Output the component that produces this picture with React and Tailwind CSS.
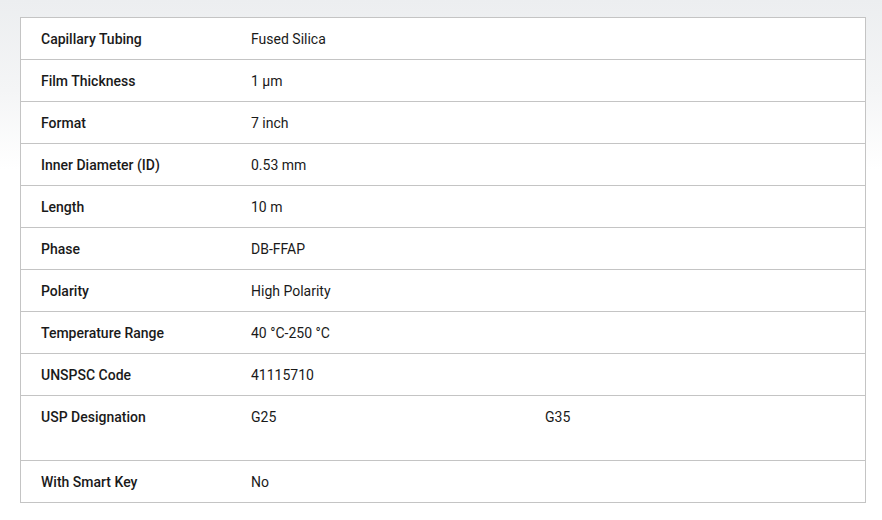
const specs = [
  ["Capillary Tubing", ["Fused Silica"]],
  ["Film Thickness", ["1 µm"]],
  ["Format", ["7 inch"]],
  ["Inner Diameter (ID)", ["0.53 mm"]],
  ["Length", ["10 m"]],
  ["Phase", ["DB-FFAP"]],
  ["Polarity", ["High Polarity"]],
  ["Temperature Range", ["40 °C-250 °C"]],
  ["UNSPSC Code", ["41115710"]],
  ["USP Designation", ["G25", "G35"]],
  ["With Smart Key", ["No"]],
];

export default function App() {
  return (
    <div
      className="w-[882px] h-[520px] bg-[linear-gradient(to_bottom,#eceef0_0px,#f4f5f6_90px,#ffffff_170px)] pt-[17px] pl-[20px] text-[#1a1a1a] text-[14px]"
      style={{ fontFamily: "Roboto, 'Liberation Sans', sans-serif" }}
    >
      <div className="w-[846px] bg-white border border-[#c4c4c4] border-b-0">
        {specs.map(([label, values]) => (
          <div key={label} className="flex border-b border-[#c4c4c4]">
            <div className="w-[230px] shrink-0 pl-[20px] pt-[11px] pb-[10px] leading-[20px] font-medium">
              {label}
            </div>
            <div className="flex flex-1">
              {values.map((v) => (
                <div
                  key={v}
                  className={
                    values.length > 1
                      ? "w-[294px] pt-[11px] pb-[33px] leading-[20px]"
                      : "pt-[11px] pb-[10px] leading-[20px]"
                  }
                >
                  {v}
                </div>
              ))}
            </div>
          </div>
        ))}
      </div>
    </div>
  );
}
